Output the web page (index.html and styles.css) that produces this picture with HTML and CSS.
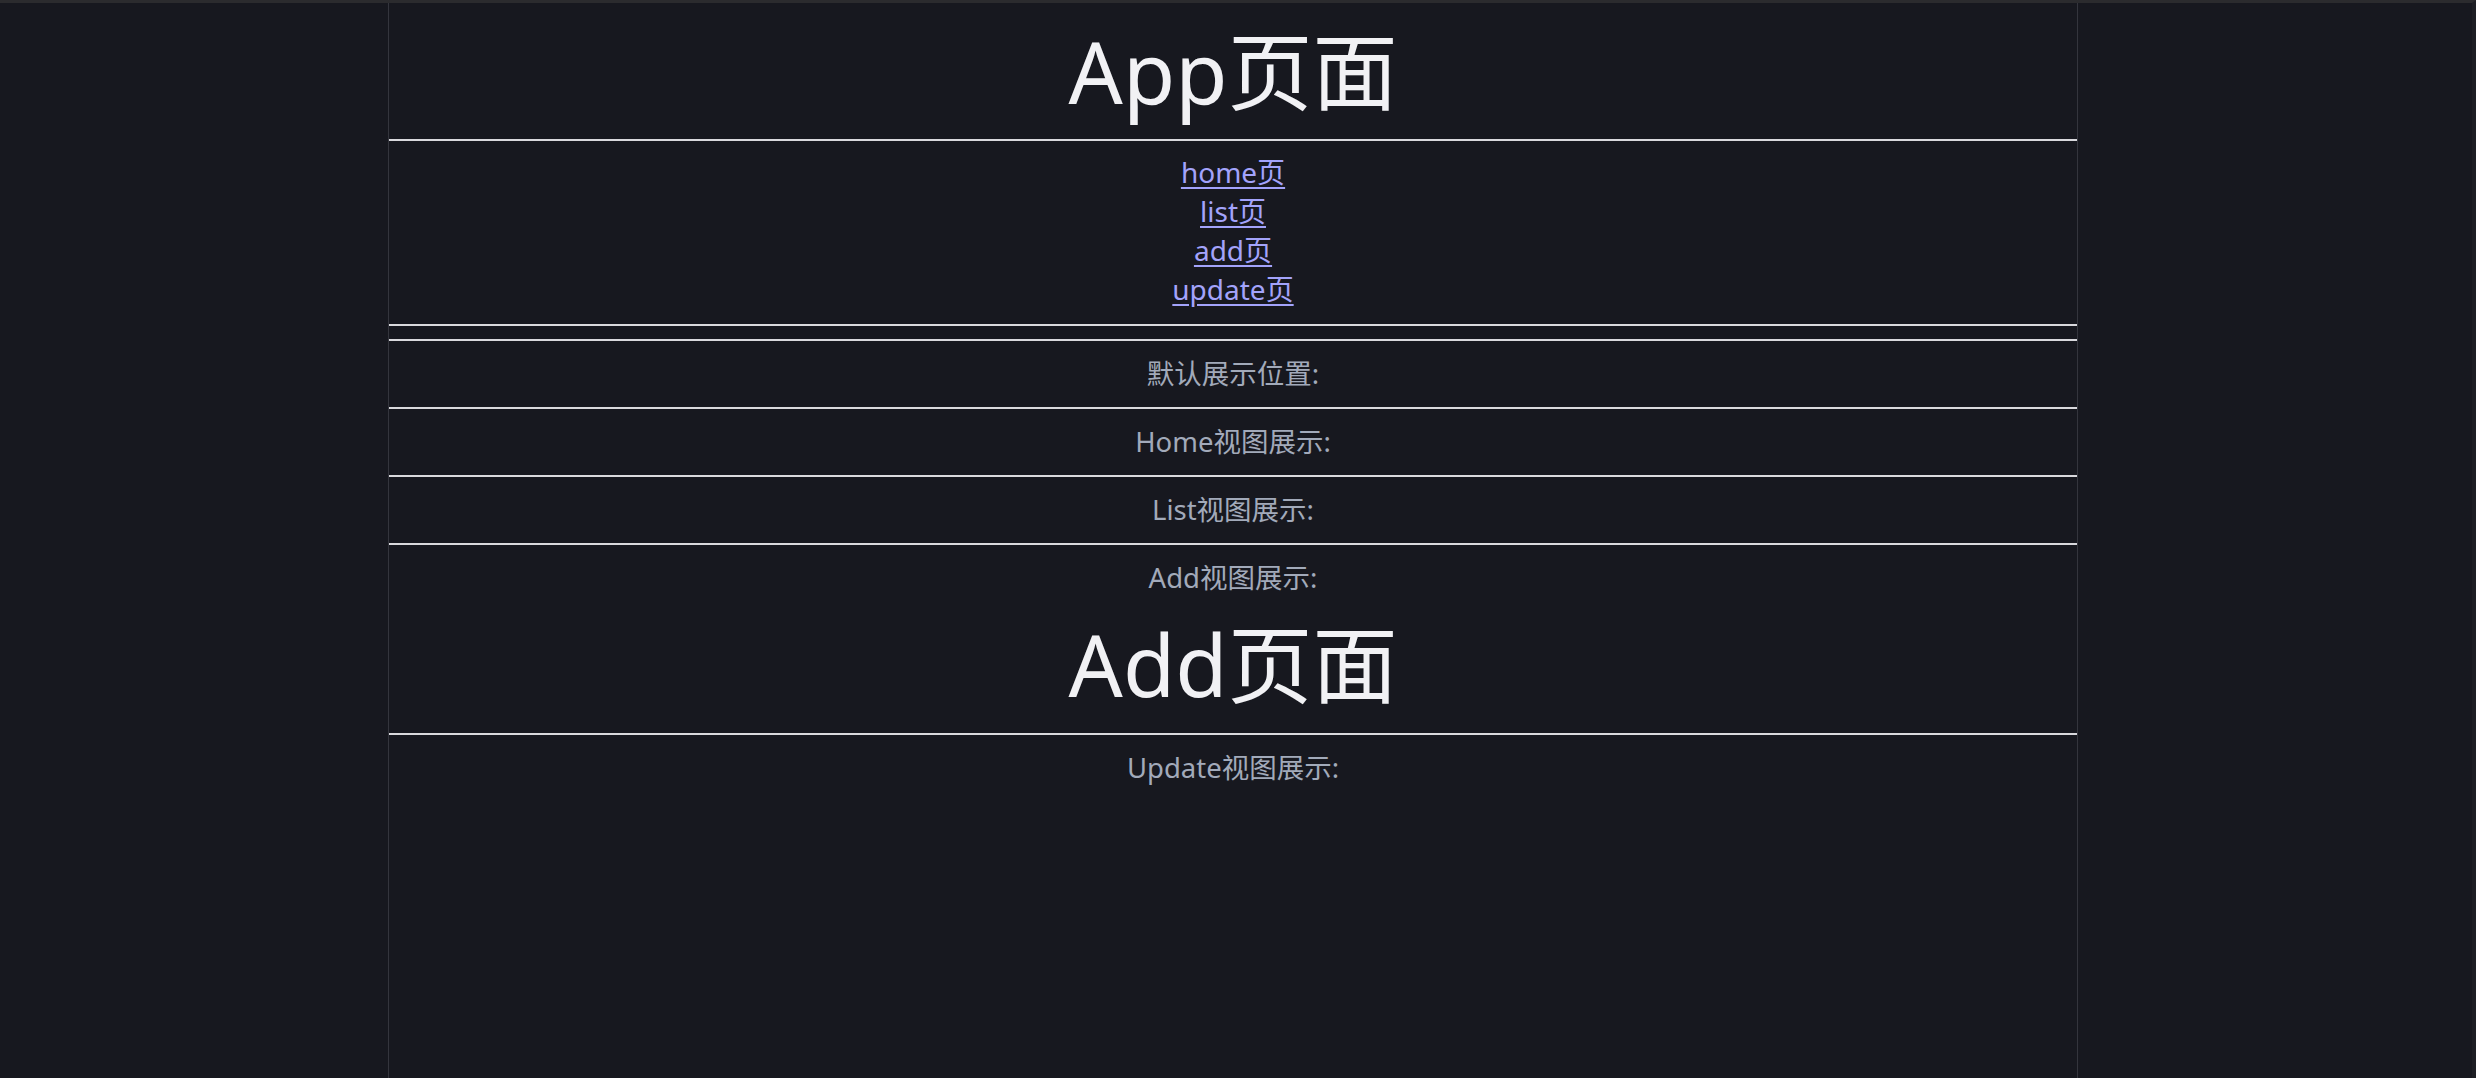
FILE: index.html
```html
<!DOCTYPE html>
<html lang="zh-CN">
<head>
  <meta charset="UTF-8" />
  <meta name="viewport" content="width=device-width, initial-scale=1.0"/>
  <title>App页面</title>
  <link rel="stylesheet" href="styles.css">
</head>
<body>
  <div class="app" id="app">
    <h1 class="app-title">App页面</h1>

    <!-- 导航链接 -->
    <div class="nav">
      <a href="#/home">home页</a>
      <a href="#/list">list页</a>
      <a href="#/add">add页</a>
      <a href="#/update">update页</a>
    </div>

    <!-- 各个 router-view -->
    <div class="views">
      <div class="view"><p class="view-label">默认展示位置:</p></div>
      <div class="view"><p class="view-label">Home视图展示:</p></div>
      <div class="view"><p class="view-label">List视图展示:</p></div>
      <div class="view">
        <p class="view-label">Add视图展示:</p>
        <h1 class="page-title">Add页面</h1>
      </div>
      <div class="view"><p class="view-label">Update视图展示:</p></div>
    </div>
  </div>
</body>
</html>
```

FILE: styles.css
```css
* {
  margin: 0;
  padding: 0;
  box-sizing: border-box;
}

html, body {
  height: 100%;
  background-color: #17181f;
  font-family: "Noto Sans", "Noto Sans CJK SC", sans-serif;
}

body {
  border-top: 3px solid #2b2b2e;
  border-right: 4px solid #1d1e24;
}

.app {
  margin-left: 388px;
  width: 1690px;
  min-height: 100%;
  border-left: 1px solid #34353d;
  border-right: 1px solid #34353d;
  text-align: center;
}

.app-title {
  font-size: 85px;
  font-weight: 400;
  line-height: 136px;
  color: #f1f1f4;
  border-bottom: 2px solid #d9d9dd;
}

.nav {
  display: flex;
  flex-direction: column;
  align-items: center;
  padding: 12px 0 15px;
  border-bottom: 2px solid #d9d9dd;
}

.nav a {
  font-size: 28px;
  line-height: 39px;
  color: #a3a3fb;
  text-decoration: underline;
  text-underline-offset: 4px;
}

.views {
  margin-top: 13px;
}

.view {
  border-top: 2px solid #d9d9dd;
}

.view-label {
  font-size: 27.5px;
  line-height: 36px;
  padding: 15px 0;
  color: #a2aaba;
}

.page-title {
  font-size: 85px;
  font-weight: 400;
  line-height: 106px;
  padding-bottom: 16px;
  color: #f1f1f4;
}
```
